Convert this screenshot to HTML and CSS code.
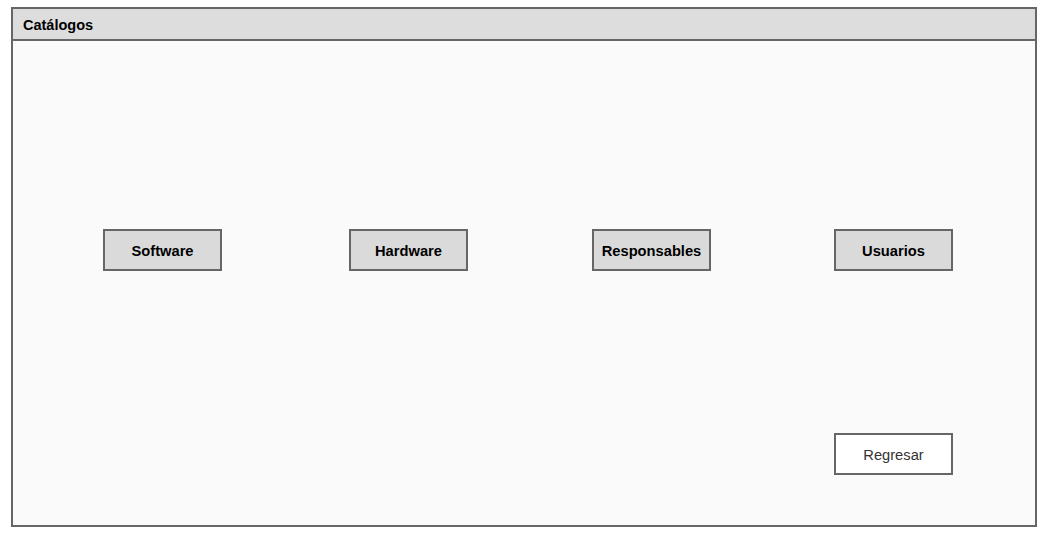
FILE: index.html
```html
<!DOCTYPE html>
<html lang="es">
<head>
    <meta charset="UTF-8">
    <title>Catálogos</title>
    <link rel="stylesheet" href="styles.css">
</head>
<body>
    <div class="window">
        <div class="title-bar">Catálogos</div>
        <div class="content">
            <div class="grid">
                <button class="btn">Software</button>
                <button class="btn">Hardware</button>
                <button class="btn">Responsables</button>
                <button class="btn">Usuarios</button>
                <button class="btn btn-back">Regresar</button>
            </div>
        </div>
    </div>
</body>
</html>
```

FILE: styles.css
```css
* {
    margin: 0;
    padding: 0;
    box-sizing: border-box;
}

body {
    font-family: "Liberation Sans", Arial, sans-serif;
    background: #ffffff;
    color: #000;
    padding: 7px 0 0 11px;
}

.window {
    width: 1026px;
    height: 520px;
    border: 2px solid #666666;
    background: #fafafa;
    display: flex;
    flex-direction: column;
}

.title-bar {
    height: 32px;
    background: #dddddd;
    border-bottom: 2px solid #666666;
    font-size: 14.5px;
    font-weight: bold;
    line-height: 30px;
    padding: 1px 0 0 10px;
}

.content {
    flex: 1;
    padding: 188px 0 0 90px;
}

.grid {
    display: grid;
    grid-template-columns: 246px 243px 242px 119px;
    row-gap: 162px;
}

.btn {
    width: 119px;
    height: 42px;
    border: 2px solid #666666;
    background: #dadada;
    font-family: "Liberation Sans", Arial, sans-serif;
    font-size: 14.7px;
    font-weight: bold;
    color: #000;
    padding-top: 1px;
}

.btn-back {
    grid-column: 4;
    background: #ffffff;
    font-weight: normal;
    color: #333333;
}
```
